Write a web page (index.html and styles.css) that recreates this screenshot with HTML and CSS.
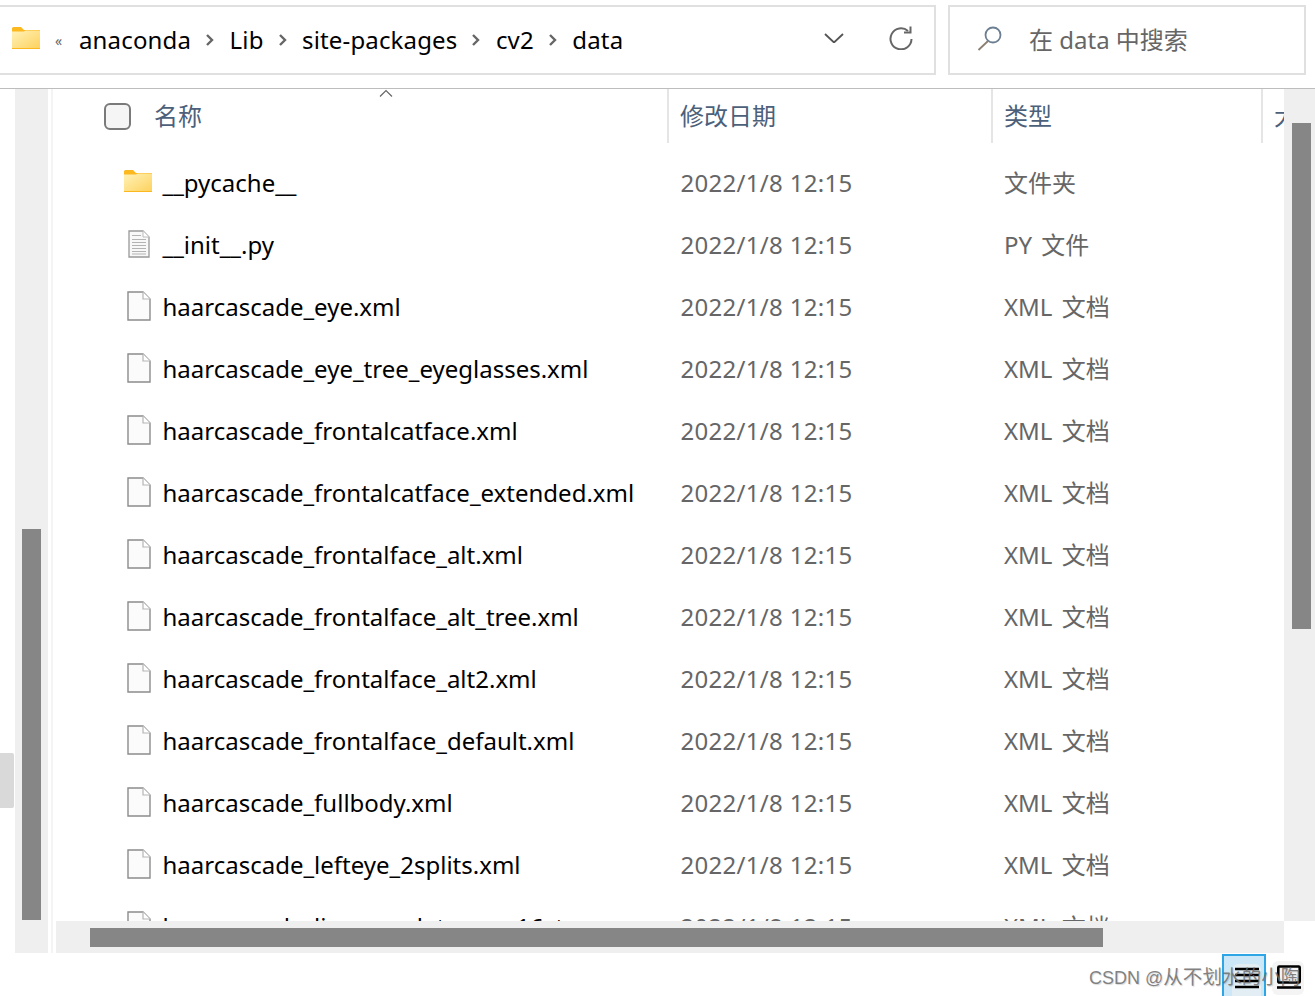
FILE: index.html
```html
<!DOCTYPE html>
<html lang="zh-CN">
<head>
  <meta charset="UTF-8">
  <title>data</title>
  <link rel="stylesheet" href="styles.css">
</head>
<body>
  <svg class="defs" width="0" height="0">
    <defs>
      <linearGradient id="folder-fill" x1="0" y1="0" x2="1" y2="1">
        <stop offset="0" stop-color="#fff2b8"/>
        <stop offset="1" stop-color="#fdd25f"/>
      </linearGradient>
      <symbol id="folder" viewBox="0 0 28 22">
        <path d="M0 1.500Q0 0 1.500 0H9l3 3h16v19H0z" fill="#fbb81f"/>
        <path d="M0 4.500h12l1.500-1H28v17.500H0z" fill="url(#folder-fill)"/>
      </symbol>
      <symbol id="file" viewBox="0 0 24 30">
        <path d="M1 1h15l7 7v21H1z" fill="#fbfbfb" stroke="#8c8c8c" stroke-width="1.400"/>
        <path d="M16 1v7h7" fill="#fff" stroke="#b5b5b5" stroke-width="1.200"/>
      </symbol>
      <symbol id="pyfile" viewBox="0 0 22 28">
        <path d="M1 1h14l6 6v20H1z" fill="#f8f8f8" stroke="#999" stroke-width="1.300"/>
        <path d="M15 1v6h6" fill="#fff" stroke="#bbb"/>
        <path d="M4 5.500h9M4 9.500h14M4 12.500h14M4 15.500h14M4 18.500h14M4 21.500h14M4 24h14" stroke="#b3b3b3" stroke-width="1.200"/>
      </symbol>
      <symbol id="chevron" viewBox="0 0 9 14">
        <path d="M2 2l5 5-5 5" fill="none" stroke="#666" stroke-width="2.400"/>
      </symbol>
    </defs>
  </svg>

  <div class="page">
    <header class="toolbar">
      <div class="address">
        <svg class="address-folder"><use href="#folder"/></svg>
        <span class="more">«</span>
        <nav class="crumbs">
          <span>anaconda</span>
          <svg class="sep"><use href="#chevron"/></svg>
          <span>Lib</span>
          <svg class="sep"><use href="#chevron"/></svg>
          <span>site-packages</span>
          <svg class="sep"><use href="#chevron"/></svg>
          <span>cv2</span>
          <svg class="sep"><use href="#chevron"/></svg>
          <span>data</span>
        </nav>
        <svg class="history" viewBox="0 0 20 10"><path d="M1 1l9 8.500L19 1" fill="none" stroke="#555" stroke-width="1.800"/></svg>
        <svg class="refresh" viewBox="0 0 24 24"><path d="M19 5A10.500 10.500 0 1 0 22.500 13" fill="none" stroke="#666" stroke-width="2"/><path d="M21.500 0.500V6.500H15" fill="none" stroke="#666" stroke-width="2"/></svg>
      </div>
      <div class="search">
        <svg class="search-icon" viewBox="0 0 26 26"><circle cx="16" cy="10" r="7.500" fill="none" stroke="#6c7f92" stroke-width="1.800"/><path d="M11 16L1.500 25" stroke="#8a7f70" stroke-width="1.800"/></svg>
        <span class="search-text">在 data 中搜索</span>
      </div>
    </header>

    <div class="body">
      <div class="edge"><div class="edge-tab"></div></div>
      <div class="track-left"><div class="thumb thumb-left"></div></div>
      <div class="divider"></div>
      <main class="pane">
        <div class="pane-top">
          <section class="list">
            <div class="head cols">
              <div class="head-name">
                <span class="check"></span>
                <span class="head-title">名称</span>
                <svg class="sort" viewBox="0 0 14 8"><path d="M1 7.500L7 1.500l6 6" fill="none" stroke="#666" stroke-width="1.200"/></svg>
              </div>
              <div class="head-cell head-date">修改日期</div>
              <div class="head-cell head-type">类型</div>
              <div class="head-cell head-size">大小</div>
            </div>
            <div class="rows">
              <div class="row cols"><div class="name"><svg class="icon icon-folder"><use href="#folder"/></svg>__pycache__</div><div class="date">2022/1/8 12:15</div><div class="type">文件夹</div></div>
              <div class="row cols"><div class="name"><svg class="icon icon-py"><use href="#pyfile"/></svg>__init__.py</div><div class="date">2022/1/8 12:15</div><div class="type">PY 文件</div></div>
              <div class="row cols"><div class="name"><svg class="icon"><use href="#file"/></svg>haarcascade_eye.xml</div><div class="date">2022/1/8 12:15</div><div class="type">XML 文档</div></div>
              <div class="row cols"><div class="name"><svg class="icon"><use href="#file"/></svg>haarcascade_eye_tree_eyeglasses.xml</div><div class="date">2022/1/8 12:15</div><div class="type">XML 文档</div></div>
              <div class="row cols"><div class="name"><svg class="icon"><use href="#file"/></svg>haarcascade_frontalcatface.xml</div><div class="date">2022/1/8 12:15</div><div class="type">XML 文档</div></div>
              <div class="row cols"><div class="name"><svg class="icon"><use href="#file"/></svg>haarcascade_frontalcatface_extended.xml</div><div class="date">2022/1/8 12:15</div><div class="type">XML 文档</div></div>
              <div class="row cols"><div class="name"><svg class="icon"><use href="#file"/></svg>haarcascade_frontalface_alt.xml</div><div class="date">2022/1/8 12:15</div><div class="type">XML 文档</div></div>
              <div class="row cols"><div class="name"><svg class="icon"><use href="#file"/></svg>haarcascade_frontalface_alt_tree.xml</div><div class="date">2022/1/8 12:15</div><div class="type">XML 文档</div></div>
              <div class="row cols"><div class="name"><svg class="icon"><use href="#file"/></svg>haarcascade_frontalface_alt2.xml</div><div class="date">2022/1/8 12:15</div><div class="type">XML 文档</div></div>
              <div class="row cols"><div class="name"><svg class="icon"><use href="#file"/></svg>haarcascade_frontalface_default.xml</div><div class="date">2022/1/8 12:15</div><div class="type">XML 文档</div></div>
              <div class="row cols"><div class="name"><svg class="icon"><use href="#file"/></svg>haarcascade_fullbody.xml</div><div class="date">2022/1/8 12:15</div><div class="type">XML 文档</div></div>
              <div class="row cols"><div class="name"><svg class="icon"><use href="#file"/></svg>haarcascade_lefteye_2splits.xml</div><div class="date">2022/1/8 12:15</div><div class="type">XML 文档</div></div>
              <div class="row cols"><div class="name"><svg class="icon"><use href="#file"/></svg>haarcascade_licence_plate_rus_16stage...</div><div class="date">2022/1/8 12:15</div><div class="type">XML 文档</div></div>
            </div>
          </section>
          <div class="track-right"><div class="thumb thumb-right"></div></div>
        </div>
        <div class="track-bottom"><div class="thumb thumb-bottom"></div></div>
      </main>
    </div>

    <footer class="status">
      <div class="view-btn view-active">
        <div class="view-inner">
          <svg class="view-icon" viewBox="0 0 24 26"><path d="M0 3h24M0 9h24M0 15h24M0 21h24" stroke="#000" stroke-width="2.400"/></svg>
        </div>
      </div>
      <div class="view-btn view-plain">
        <svg class="view-icon" viewBox="0 0 24 26"><rect x="1.300" y="1.500" width="21.400" height="16" rx="1" fill="none" stroke="#000" stroke-width="2.600"/><path d="M0 22.500h24" stroke="#000" stroke-width="2.600"/></svg>
      </div>
    </footer>

    <div class="watermark"><span class="watermark-latin">CSDN @</span>从不划水的小陶</div>
  </div>
</body>
</html>
```

FILE: styles.css
```css
* {
  box-sizing: border-box;
}

body {
  margin: 0;
  background: #fff;
  font-family: "Noto Sans", "Noto Sans CJK SC", sans-serif;
  font-size: 24px;
}

.defs {
  position: absolute;
}

.page {
  position: relative;
  width: 1315px;
  height: 996px;
  overflow: hidden;
  display: flex;
  flex-direction: column;
}

/* top bar */
.toolbar {
  height: 89px;
  flex: none;
  padding-top: 5px;
  display: flex;
  align-items: flex-start;
  border-bottom: 1px solid #bdbdbd;
}

.address {
  width: 936px;
  height: 70px;
  flex: none;
  display: flex;
  align-items: center;
  padding-left: 12px;
  border: 2px solid #e0e0e0;
  border-left: none;
}

.address-folder {
  width: 28px;
  height: 22px;
  flex: none;
  margin-top: -4px;
}

.more {
  width: 39px;
  padding-left: 15px;
  font-size: 14px;
  color: #666;
  flex: none;
}

.crumbs {
  display: flex;
  align-items: center;
  flex: 1;
  margin-top: -2px;
  color: #000;
  letter-spacing: 0.15px;
}

.sep {
  width: 9px;
  height: 14px;
  margin: 2px 15.500px 0 14px;
  flex: none;
}

.history {
  width: 20px;
  height: 10px;
  flex: none;
  margin: -4px 45px 0 0;
}

.refresh {
  width: 24px;
  height: 24px;
  flex: none;
  margin: -4px 21px 0 0;
}

.search {
  width: 358px;
  height: 70px;
  margin-left: 12px;
  display: flex;
  align-items: center;
  padding-left: 27px;
  border: 2px solid #e0e0e0;
  color: #666;
}

.search-icon {
  width: 26px;
  height: 26px;
  flex: none;
  margin: -4px 26px 0 0;
}

.search-text {
  margin-top: -3px;
}

/* main area */
.body {
  height: 864px;
  flex: none;
  display: flex;
}

.edge {
  width: 15px;
  flex: none;
  padding-top: 664px;
}

.edge-tab {
  width: 14px;
  height: 55px;
  background: #d9d9d9;
  border-radius: 0 2px 2px 0;
}

.track-left {
  width: 33px;
  flex: none;
  background: #efefef;
  padding: 440px 0 0 7px;
}

.thumb {
  background: #868686;
}

.thumb-left {
  width: 19px;
  height: 391px;
}

.divider {
  width: 5px;
  flex: none;
  margin-left: 3px;
  border-left: 2px solid #f4f4f4;
}

.pane {
  flex: 1;
  min-width: 0;
  display: flex;
  flex-direction: column;
}

.pane-top {
  height: 832px;
  flex: none;
  display: flex;
}

.list {
  width: 1228px;
  flex: none;
  overflow: hidden;
}

.cols {
  display: grid;
  grid-template-columns: 611px 324px 270px 23px;
}

.head {
  height: 54px;
  color: #4c607a;
}

.head-name {
  position: relative;
  display: flex;
  align-items: center;
  padding: 0 0 0 48px;
  gap: 23px;
}

.head-title {
  margin-bottom: 4px;
}

.check {
  width: 27px;
  height: 27px;
  flex: none;
  background: #f5f5f5;
  border: 2px solid #7a7a7a;
  border-radius: 6px;
}

.sort {
  position: absolute;
  left: 323px;
  top: 0;
  width: 14px;
  height: 8px;
}

.head-cell {
  display: flex;
  align-items: center;
  padding-bottom: 4px;
  border-left: 2px solid #e5e5e5;
  white-space: nowrap;
  overflow: hidden;
}

.head-date {
  padding-left: 11px;
}

.head-type {
  padding-left: 11px;
}

.head-size {
  padding-left: 11px;
}

.rows {
  padding-top: 8px;
}

.row {
  height: 62px;
  align-items: center;
  color: #666;
  white-space: nowrap;
}

.name {
  display: flex;
  align-items: center;
  padding-left: 68px;
  color: #000;
}

.icon {
  width: 24px;
  height: 30px;
  flex: none;
  margin: 0 11.500px 0 3px;
}

.icon-folder {
  width: 28px;
  height: 22px;
  margin: -2px 10.500px 0 0;
}

.icon-py {
  width: 22px;
  height: 28px;
  margin: 0 12.500px 0 4px;
}

.date {
  padding-left: 13.500px;
  letter-spacing: 0.3px;
}

.type {
  padding-left: 13px;
  margin-top: -2px;
  word-spacing: 3px;
}

.track-right {
  width: 31px;
  flex: none;
  background: #efefef;
  padding: 34px 0 0 8px;
}

.thumb-right {
  width: 19px;
  height: 506px;
}

.track-bottom {
  width: 1228px;
  height: 32px;
  flex: none;
  background: #efefef;
  padding: 7px 0 0 34px;
}

.thumb-bottom {
  width: 1013px;
  height: 19px;
}

/* bottom right view buttons */
.status {
  flex: 1;
  display: flex;
  align-items: flex-start;
  justify-content: flex-end;
  padding: 1px 11px 0 0;
  gap: 6px;
}

.view-btn {
  flex: none;
}

.view-active {
  width: 44px;
  height: 44px;
  padding: 8px 3px 0 8px;
  background: #cce8f8;
  border: 2px solid #2ea6e6;
  border-bottom: none;
}

.view-inner {
  height: 100%;
  display: flex;
  justify-content: center;
  padding-top: 2px;
  background: #e2eef4;
  border-radius: 6px 6px 0 0;
}

.view-plain {
  width: 32px;
  height: 34px;
  margin-top: 7px;
  padding: 4px 3px 0 5px;
  background: #f4f4f4;
  border-radius: 6px;
}

.view-icon {
  width: 24px;
  height: 26px;
  display: block;
}

.watermark {
  position: absolute;
  left: 1089px;
  top: 964px;
  font-family: "Liberation Sans", "Noto Sans CJK SC", sans-serif;
  font-size: 19.600px;
  line-height: 26px;
  color: rgba(110, 110, 110, 0.85);
  text-shadow: 1px 1px 1px rgba(0, 0, 0, 0.15);
  white-space: nowrap;
}

.watermark-latin {
  font-size: 18px;
}
```
